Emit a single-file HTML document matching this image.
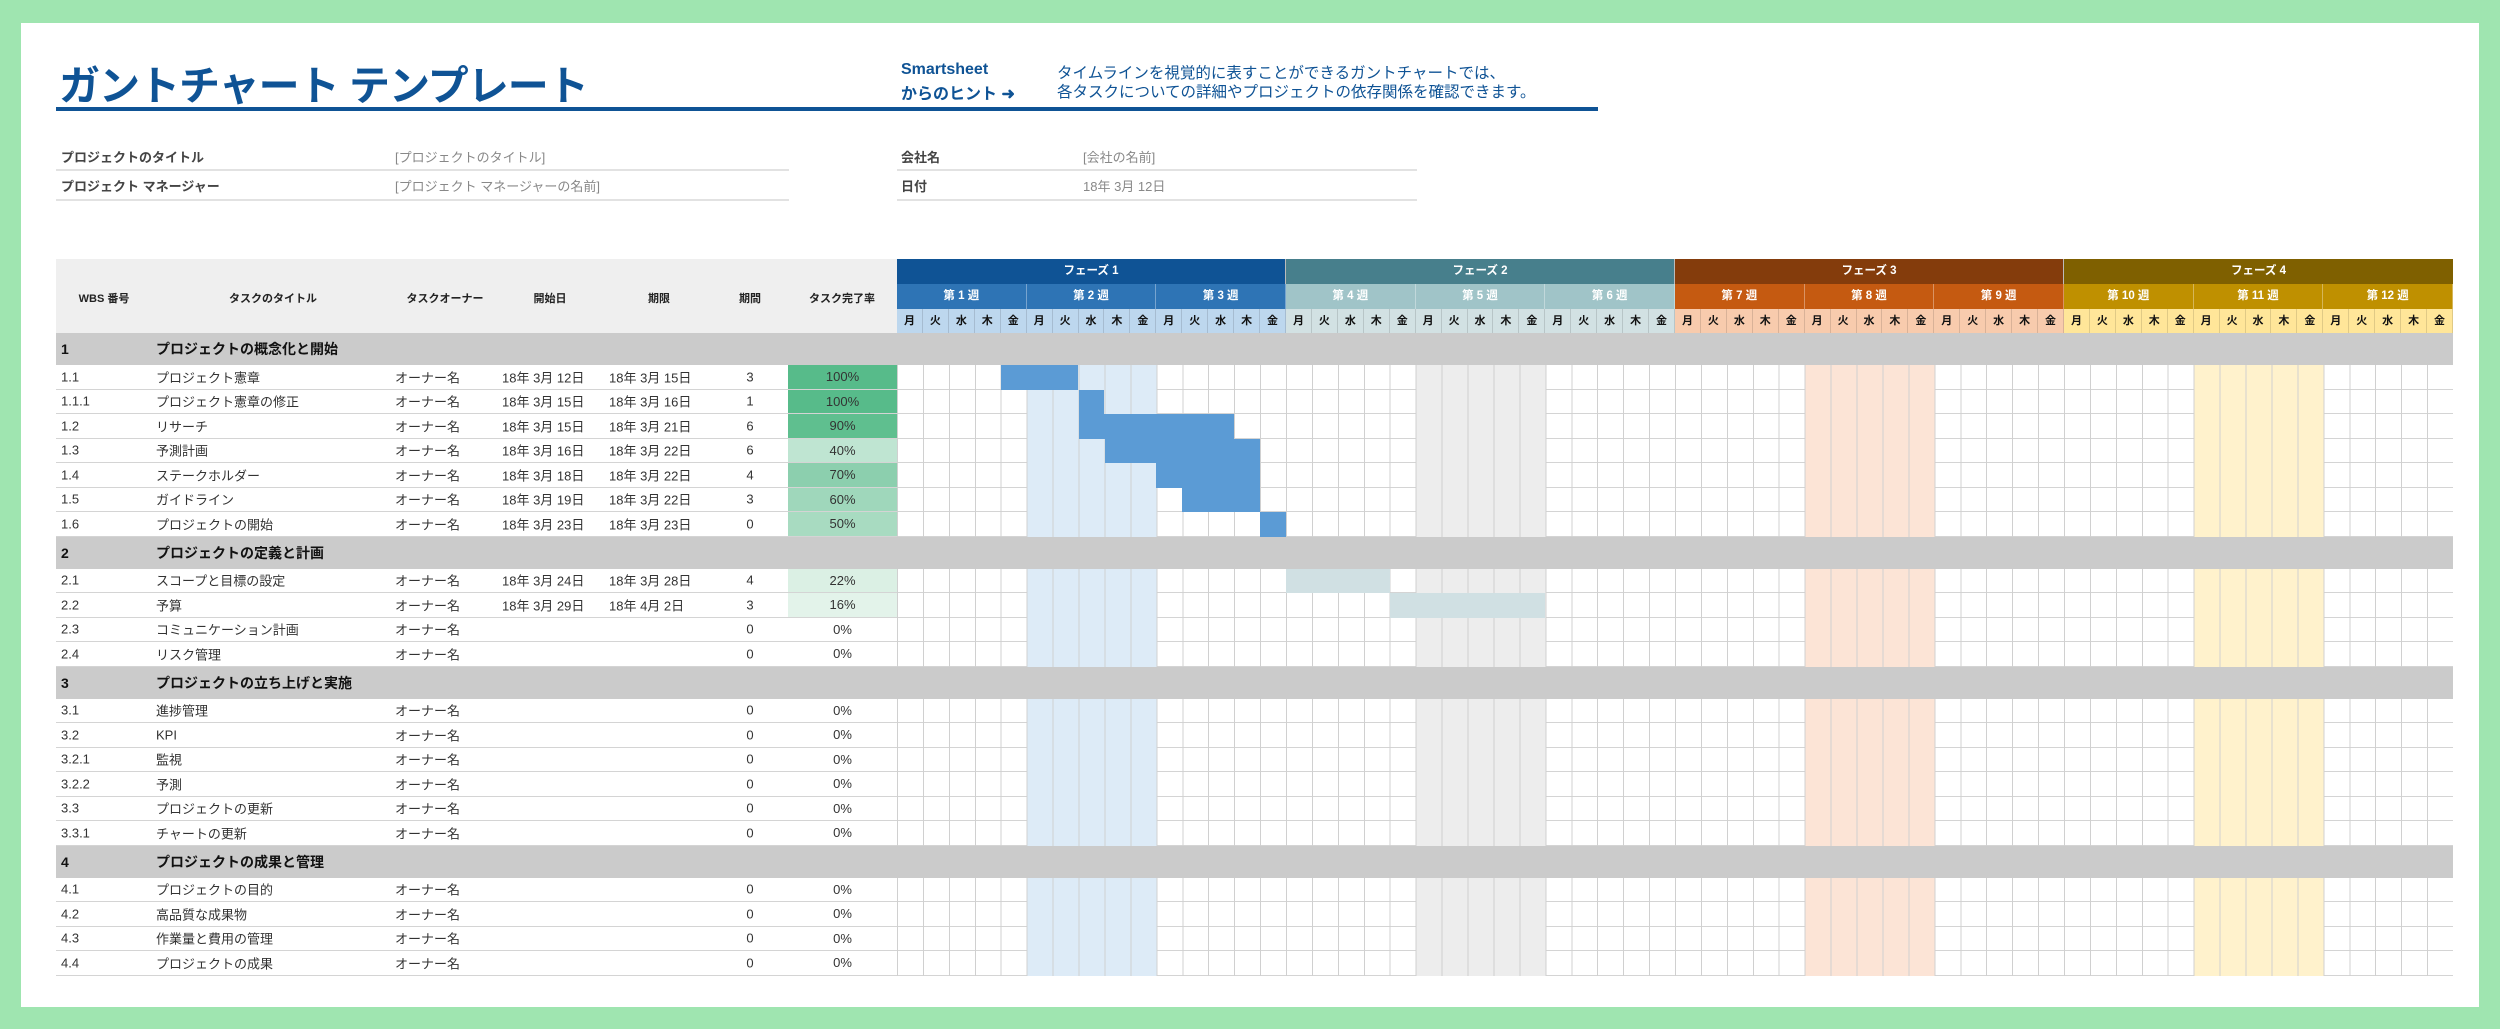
<!DOCTYPE html>
<html><head><meta charset="utf-8">
<style>
*{margin:0;padding:0;box-sizing:border-box}
body{width:2500px;height:1029px;background:#9fe5b0;position:relative;overflow:hidden;font-family:"Liberation Sans","Noto Sans CJK JP",sans-serif;color:#333}
.panel{position:absolute;left:21px;top:23px;width:2458px;height:984px;background:#fff}
.abs{position:absolute;white-space:nowrap}
.title{left:59px;top:52px;font-size:41px;font-weight:bold;color:#0f5395;letter-spacing:-1px}
.bl{left:56px;top:107px;width:1542px;height:4px;background:#0f5395}
.hint{left:901px;font-size:16px;font-weight:bold;color:#0f5395}
.hint2{left:1057px;font-size:15.5px;color:#0f5395}
.lab{left:61px;font-size:13px;font-weight:bold;color:#444}
.val{font-size:13px;color:#888}
.ln{height:2px;background:#e2e2e2}
.hdr{left:56px;top:259px;width:841px;height:74px;background:#efefef}
.hc{top:290px;font-size:11px;font-weight:bold;color:#222;transform:translateX(-50%)}
#rows{position:absolute;left:56px;top:333px;width:2397px}
.r{position:relative;height:24.5px;border-bottom:1px solid #d4d4d4;font-size:13px;color:#333}
.r span,.s span{position:absolute;top:50%;transform:translateY(-50%);white-space:nowrap}
.s{position:relative;height:32px;background:#cbcbcb;font-size:14px;font-weight:bold;color:#111}
.c1{left:5px}.c2{left:100px}.c3{left:339px}.c4{left:446px}.c5{left:553px}
.c6{left:694px;transform:translate(-50%,-50%)!important}
.pc{position:absolute;left:732px;width:109px;top:0;bottom:0;text-align:center;line-height:24px}
.g{position:absolute;left:841px;width:1556px;top:0;bottom:-1px;
background-image:repeating-linear-gradient(to right,#d0d0d0 0 1px,transparent 1px 25.9333px),
linear-gradient(to right,transparent 129.67px,#ddebf7 129.67px 259.33px,transparent 259.33px 518.67px,#ededed 518.67px 648.33px,transparent 648.33px 907.67px,#fce4d6 907.67px 1037.33px,transparent 1037.33px 1296.67px,#fff2cc 1296.67px 1426.33px,transparent 1426.33px)}
.b{position:absolute;top:0;bottom:0;background:#5b9bd5}
.b2{position:absolute;top:0;bottom:0;background:#d0e0e3}
.gh{position:absolute;left:897px;width:1556px;display:grid;grid-template-columns:repeat(60,1fr);color:#fff;font-weight:bold;text-align:center}
.ph{top:259px;height:25px;grid-template-columns:repeat(4,1fr);font-size:11.5px;line-height:25px}
.wk{top:284px;height:25px;grid-template-columns:repeat(12,1fr);font-size:11.5px;line-height:25px}
.dy{top:309px;height:24px;font-size:11px;line-height:24px;color:#111}
.ph div{border-right:1px solid #bbb}
.wk div{border-right:1px solid rgba(255,255,255,.35)}
.dy div{border-right:1px solid rgba(0,0,0,.12)}
</style></head><body>
<div class="panel"></div>
<div class="abs title">ガントチャート テンプレート</div>
<div class="abs bl"></div>
<div class="abs hint" style="top:61px">Smartsheet</div>
<div class="abs hint" style="top:80px">からのヒント ➜</div>
<div class="abs hint2" style="top:61px">タイムラインを視覚的に表すことができるガントチャートでは、</div>
<div class="abs hint2" style="top:80px">各タスクについての詳細やプロジェクトの依存関係を確認できます。</div>

<div class="abs lab" style="top:147px">プロジェクトのタイトル</div>
<div class="abs val" style="left:395px;top:147px">[プロジェクトのタイトル]</div>
<div class="abs ln" style="left:56px;top:169px;width:733px"></div>
<div class="abs lab" style="top:176px">プロジェクト マネージャー</div>
<div class="abs val" style="left:395px;top:176px">[プロジェクト マネージャーの名前]</div>
<div class="abs ln" style="left:56px;top:199px;width:733px"></div>
<div class="abs lab" style="left:901px;top:147px">会社名</div>
<div class="abs val" style="left:1083px;top:147px">[会社の名前]</div>
<div class="abs ln" style="left:897px;top:169px;width:520px"></div>
<div class="abs lab" style="left:901px;top:176px">日付</div>
<div class="abs val" style="left:1083px;top:176px">18年 3月 12日</div>
<div class="abs ln" style="left:897px;top:199px;width:520px"></div>

<div class="abs hdr"></div>
<div class="abs hc" style="left:104px">WBS 番号</div>
<div class="abs hc" style="left:273px">タスクのタイトル</div>
<div class="abs hc" style="left:445px">タスクオーナー</div>
<div class="abs hc" style="left:550px">開始日</div>
<div class="abs hc" style="left:659px">期限</div>
<div class="abs hc" style="left:750px">期間</div>
<div class="abs hc" style="left:842px">タスク完了率</div>

<div class="gh ph"><div style="background:#0f5395">フェーズ 1</div><div style="background:#477f8c">フェーズ 2</div><div style="background:#843c0c">フェーズ 3</div><div style="background:#7f6000;border-right:none">フェーズ 4</div></div>
<div class="gh wk">
<div style="background:#2e74b5">第 1 週</div><div style="background:#2e74b5">第 2 週</div><div style="background:#2e74b5">第 3 週</div>
<div style="background:#a0c4c8">第 4 週</div><div style="background:#a0c4c8">第 5 週</div><div style="background:#a0c4c8">第 6 週</div>
<div style="background:#c55a11">第 7 週</div><div style="background:#c55a11">第 8 週</div><div style="background:#c55a11">第 9 週</div>
<div style="background:#bf9000">第 10 週</div><div style="background:#bf9000">第 11 週</div><div style="background:#bf9000">第 12 週</div>
</div>
<div class="gh dy">
<div style="background:#bdd7ee">月</div><div style="background:#bdd7ee">火</div><div style="background:#bdd7ee">水</div><div style="background:#bdd7ee">木</div><div style="background:#bdd7ee">金</div>
<div style="background:#bdd7ee">月</div><div style="background:#bdd7ee">火</div><div style="background:#bdd7ee">水</div><div style="background:#bdd7ee">木</div><div style="background:#bdd7ee">金</div>
<div style="background:#bdd7ee">月</div><div style="background:#bdd7ee">火</div><div style="background:#bdd7ee">水</div><div style="background:#bdd7ee">木</div><div style="background:#bdd7ee">金</div>
<div style="background:#d2e1e3">月</div><div style="background:#d2e1e3">火</div><div style="background:#d2e1e3">水</div><div style="background:#d2e1e3">木</div><div style="background:#d2e1e3">金</div>
<div style="background:#d2e1e3">月</div><div style="background:#d2e1e3">火</div><div style="background:#d2e1e3">水</div><div style="background:#d2e1e3">木</div><div style="background:#d2e1e3">金</div>
<div style="background:#d2e1e3">月</div><div style="background:#d2e1e3">火</div><div style="background:#d2e1e3">水</div><div style="background:#d2e1e3">木</div><div style="background:#d2e1e3">金</div>
<div style="background:#f8cbad">月</div><div style="background:#f8cbad">火</div><div style="background:#f8cbad">水</div><div style="background:#f8cbad">木</div><div style="background:#f8cbad">金</div>
<div style="background:#f8cbad">月</div><div style="background:#f8cbad">火</div><div style="background:#f8cbad">水</div><div style="background:#f8cbad">木</div><div style="background:#f8cbad">金</div>
<div style="background:#f8cbad">月</div><div style="background:#f8cbad">火</div><div style="background:#f8cbad">水</div><div style="background:#f8cbad">木</div><div style="background:#f8cbad">金</div>
<div style="background:#ffe699">月</div><div style="background:#ffe699">火</div><div style="background:#ffe699">水</div><div style="background:#ffe699">木</div><div style="background:#ffe699">金</div>
<div style="background:#ffe699">月</div><div style="background:#ffe699">火</div><div style="background:#ffe699">水</div><div style="background:#ffe699">木</div><div style="background:#ffe699">金</div>
<div style="background:#ffe699">月</div><div style="background:#ffe699">火</div><div style="background:#ffe699">水</div><div style="background:#ffe699">木</div><div style="background:#ffe699">金</div>
</div>

<div id="rows">
<div class="s"><span class="c1">1</span><span class="c2">プロジェクトの概念化と開始</span></div>
<div class="r"><span class="c1">1.1</span><span class="c2">プロジェクト憲章</span><span class="c3">オーナー名</span><span class="c4">18年 3月 12日</span><span class="c5">18年 3月 15日</span><span class="c6">3</span><div class="pc" style="background:#57bb8a">100%</div><div class="g"><div class="b" style="left:103.7px;width:77.8px"></div></div></div>
<div class="r"><span class="c1">1.1.1</span><span class="c2">プロジェクト憲章の修正</span><span class="c3">オーナー名</span><span class="c4">18年 3月 15日</span><span class="c5">18年 3月 16日</span><span class="c6">1</span><div class="pc" style="background:#57bb8a">100%</div><div class="g"><div class="b" style="left:181.5px;width:25.9px"></div></div></div>
<div class="r"><span class="c1">1.2</span><span class="c2">リサーチ</span><span class="c3">オーナー名</span><span class="c4">18年 3月 15日</span><span class="c5">18年 3月 21日</span><span class="c6">6</span><div class="pc" style="background:#5fbf8f">90%</div><div class="g"><div class="b" style="left:181.5px;width:155.6px"></div></div></div>
<div class="r"><span class="c1">1.3</span><span class="c2">予測計画</span><span class="c3">オーナー名</span><span class="c4">18年 3月 16日</span><span class="c5">18年 3月 22日</span><span class="c6">6</span><div class="pc" style="background:#bfe5d2">40%</div><div class="g"><div class="b" style="left:207.5px;width:155.6px"></div></div></div>
<div class="r"><span class="c1">1.4</span><span class="c2">ステークホルダー</span><span class="c3">オーナー名</span><span class="c4">18年 3月 18日</span><span class="c5">18年 3月 22日</span><span class="c6">4</span><div class="pc" style="background:#8ccfae">70%</div><div class="g"><div class="b" style="left:259.3px;width:103.7px"></div></div></div>
<div class="r"><span class="c1">1.5</span><span class="c2">ガイドライン</span><span class="c3">オーナー名</span><span class="c4">18年 3月 19日</span><span class="c5">18年 3月 22日</span><span class="c6">3</span><div class="pc" style="background:#9fd7bb">60%</div><div class="g"><div class="b" style="left:285.3px;width:77.8px"></div></div></div>
<div class="r"><span class="c1">1.6</span><span class="c2">プロジェクトの開始</span><span class="c3">オーナー名</span><span class="c4">18年 3月 23日</span><span class="c5">18年 3月 23日</span><span class="c6">0</span><div class="pc" style="background:#a8dbc1">50%</div><div class="g"><div class="b" style="left:363px;width:25.9px"></div></div></div>

<div class="s"><span class="c1">2</span><span class="c2">プロジェクトの定義と計画</span></div>
<div class="r"><span class="c1">2.1</span><span class="c2">スコープと目標の設定</span><span class="c3">オーナー名</span><span class="c4">18年 3月 24日</span><span class="c5">18年 3月 28日</span><span class="c6">4</span><div class="pc" style="background:#dbf0e4">22%</div><div class="g"><div class="b2" style="left:389px;width:103.7px"></div></div></div>
<div class="r"><span class="c1">2.2</span><span class="c2">予算</span><span class="c3">オーナー名</span><span class="c4">18年 3月 29日</span><span class="c5">18年 4月 2日</span><span class="c6">3</span><div class="pc" style="background:#e3f3ea">16%</div><div class="g"><div class="b2" style="left:492.7px;width:155.6px"></div></div></div>
<div class="r"><span class="c1">2.3</span><span class="c2">コミュニケーション計画</span><span class="c3">オーナー名</span><span class="c6">0</span><div class="pc">0%</div><div class="g"></div></div>
<div class="r"><span class="c1">2.4</span><span class="c2">リスク管理</span><span class="c3">オーナー名</span><span class="c6">0</span><div class="pc">0%</div><div class="g"></div></div>

<div class="s"><span class="c1">3</span><span class="c2">プロジェクトの立ち上げと実施</span></div>
<div class="r"><span class="c1">3.1</span><span class="c2">進捗管理</span><span class="c3">オーナー名</span><span class="c6">0</span><div class="pc">0%</div><div class="g"></div></div>
<div class="r"><span class="c1">3.2</span><span class="c2">KPI</span><span class="c3">オーナー名</span><span class="c6">0</span><div class="pc">0%</div><div class="g"></div></div>
<div class="r"><span class="c1">3.2.1</span><span class="c2">監視</span><span class="c3">オーナー名</span><span class="c6">0</span><div class="pc">0%</div><div class="g"></div></div>
<div class="r"><span class="c1">3.2.2</span><span class="c2">予測</span><span class="c3">オーナー名</span><span class="c6">0</span><div class="pc">0%</div><div class="g"></div></div>
<div class="r"><span class="c1">3.3</span><span class="c2">プロジェクトの更新</span><span class="c3">オーナー名</span><span class="c6">0</span><div class="pc">0%</div><div class="g"></div></div>
<div class="r"><span class="c1">3.3.1</span><span class="c2">チャートの更新</span><span class="c3">オーナー名</span><span class="c6">0</span><div class="pc">0%</div><div class="g"></div></div>

<div class="s"><span class="c1">4</span><span class="c2">プロジェクトの成果と管理</span></div>
<div class="r"><span class="c1">4.1</span><span class="c2">プロジェクトの目的</span><span class="c3">オーナー名</span><span class="c6">0</span><div class="pc">0%</div><div class="g"></div></div>
<div class="r"><span class="c1">4.2</span><span class="c2">高品質な成果物</span><span class="c3">オーナー名</span><span class="c6">0</span><div class="pc">0%</div><div class="g"></div></div>
<div class="r"><span class="c1">4.3</span><span class="c2">作業量と費用の管理</span><span class="c3">オーナー名</span><span class="c6">0</span><div class="pc">0%</div><div class="g"></div></div>
<div class="r"><span class="c1">4.4</span><span class="c2">プロジェクトの成果</span><span class="c3">オーナー名</span><span class="c6">0</span><div class="pc">0%</div><div class="g"></div></div>
</div>
</body></html>
